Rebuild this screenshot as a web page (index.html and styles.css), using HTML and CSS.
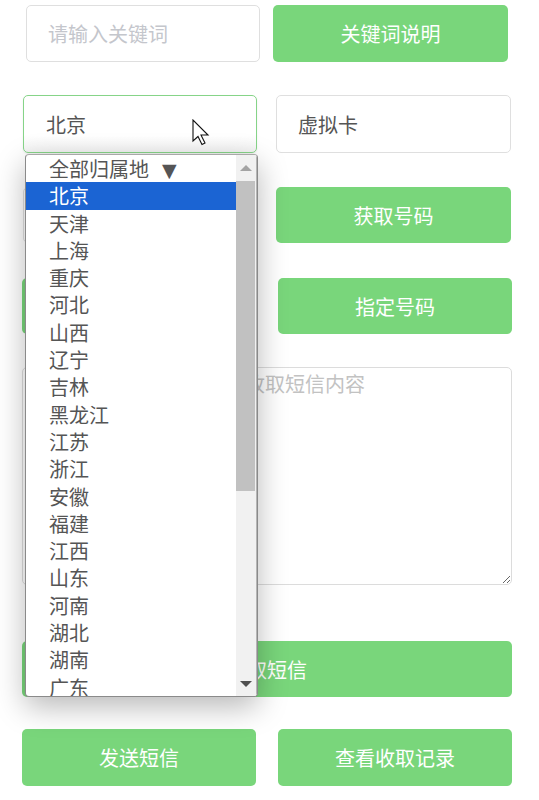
FILE: index.html
```html
<!DOCTYPE html>
<html lang="zh-CN">
<head>
<meta charset="utf-8">
<title>收取短信</title>
<link rel="stylesheet" href="styles.css">
</head>
<body>
<div class="page">
  <div class="row r1">
    <div class="field placeholder">请输入关键词</div>
    <div class="btn">关键词说明</div>
  </div>
  <div class="row r2">
    <div class="field select">北京</div>
    <div class="field">虚拟卡</div>
  </div>
  <div class="row r3">
    <div class="field placeholder">请输入号码</div>
    <div class="btn">获取号码</div>
  </div>
  <div class="row r4">
    <div class="btn">释放号码</div>
    <div class="btn">指定号码</div>
  </div>
  <div class="row r5">
    <textarea class="area" placeholder="此处将显示当前号码的收取短信内容"></textarea>
  </div>
  <div class="row r6">
    <div class="btn">收取短信</div>
  </div>
  <div class="row r7">
    <div class="btn">发送短信</div>
    <div class="btn">查看收取记录</div>
  </div>

  <div class="dropdown">
    <ul class="options">
      <li>全部归属地<span class="tri">▼</span></li>
      <li class="sel">北京</li>
      <li>天津</li>
      <li>上海</li>
      <li>重庆</li>
      <li>河北</li>
      <li>山西</li>
      <li>辽宁</li>
      <li>吉林</li>
      <li>黑龙江</li>
      <li>江苏</li>
      <li>浙江</li>
      <li>安徽</li>
      <li>福建</li>
      <li>江西</li>
      <li>山东</li>
      <li>河南</li>
      <li>湖北</li>
      <li>湖南</li>
      <li>广东</li>
    </ul>
    <div class="scrollbar">
      <div class="arrow up"></div>
      <div class="thumb"></div>
      <div class="track"></div>
      <div class="arrow down"></div>
    </div>
  </div>

  <svg class="cursor" width="19" height="27" viewBox="0 0 19 27">
    <path d="M1 1 L1 22 L6 17.5 L10 25.5 L13 24 L9 16 L16 16 Z" fill="#fff" stroke="#111" stroke-width="1.1" stroke-linejoin="miter"/>
  </svg>
</div>
</body>
</html>
```

FILE: styles.css
```css
* { box-sizing: border-box; }
html, body { margin: 0; padding: 0; background: #fff; }
body {
  font-family: "Noto Sans CJK SC", "Noto Sans", sans-serif;
  width: 539px;
  height: 800px;
  overflow: hidden;
}
.page {
  position: relative;
  display: flex;
  flex-direction: column;
  padding-top: 5px;
}
.row {
  display: grid;
}
.r1 { grid-template-columns: 234px 235px; column-gap: 13px; padding-left: 26px; height: 57px; }
.r2 { grid-template-columns: 234px 235px; column-gap: 19px; padding-left: 23px; height: 58px; margin-top: 33px; }
.r3 { grid-template-columns: 234px 235px; column-gap: 19px; padding-left: 23px; height: 56px; margin-top: 34px; }
.r4 { grid-template-columns: 234px 234px; column-gap: 22px; padding-left: 22px; height: 56px; margin-top: 35px; }
.r5 { grid-template-columns: 490px; padding-left: 22px; height: 218px; margin-top: 33px; }
.r6 { grid-template-columns: 490px; padding-left: 22px; height: 56px; margin-top: 56px; }
.r7 { grid-template-columns: 234px 234px; column-gap: 22px; padding-left: 22px; height: 57px; margin-top: 32px; }

.field {
  border: 1px solid #dfdfdf;
  border-radius: 5px;
  background: #fff;
  display: flex;
  align-items: center;
  padding-left: 21px;
  font-size: 20px;
  color: #555;
}
.field.placeholder { color: #c4c6cc; }
.field.select {
  border-color: #86d488;
  padding-left: 22px;
  background: linear-gradient(to bottom, #fff 70%, #f3f3f3 100%);
  box-shadow: 0 1px 2px rgba(0,0,0,0.08);
}
.btn {
  background: #79d67b;
  border-radius: 5px;
  color: #fff;
  font-size: 20px;
  display: flex;
  align-items: center;
  justify-content: center;
}
.area {
  border: 1px solid #dcdcdc;
  border-radius: 5px;
  padding: 2px 22px;
  font-family: "Noto Sans CJK SC", "Noto Sans", sans-serif;
  font-size: 20px;
  line-height: 28px;
  resize: both;
  width: 490px;
  height: 218px;
  margin: 0;
  outline: none;
}
.area::placeholder { color: #c2c2c2; }

.dropdown {
  position: absolute;
  left: 25px;
  top: 154px;
  width: 233px;
  height: 543px;
  border: 1px solid #8a8a8a;
  border-top-color: #a8a8a8;
  border-radius: 4px;
  background: #fff;
  box-shadow: 0 10px 30px rgba(0,0,0,0.28);
  display: flex;
  overflow: hidden;
}
.options {
  list-style: none;
  margin: 0;
  padding: 0;
  flex: 1;
  font-size: 20px;
  line-height: 27.3px;
  color: #555;
}
.options li {
  padding-left: 23px;
  height: 27.3px;
  white-space: nowrap;
  overflow: hidden;
}
.options li.sel { background: #1b64d3; color: #fff; }
.tri { font-family: "DejaVu Sans", sans-serif; font-size: 19px; color: #555; margin-left: 13px; }

.scrollbar {
  width: 21px;
  display: flex;
  flex-direction: column;
  background: #f1f1f1;
  border-right: 1px solid #b5b5b5;
}
.arrow {
  height: 26px;
  display: flex;
  justify-content: center;
  align-items: center;
}
.arrow.up::before {
  content: "";
  border-left: 6px solid transparent;
  border-right: 6px solid transparent;
  border-bottom: 6px solid #a3a3a3;
}
.arrow.down { height: 24px; }
.arrow.down::before {
  content: "";
  border-left: 6px solid transparent;
  border-right: 6px solid transparent;
  border-top: 6px solid #505050;
}
.thumb {
  height: 310px;
  background: #c1c1c1;
  margin: 0 1px 0 0;
}
.track { flex: 1; }

.cursor {
  position: absolute;
  left: 192px;
  top: 119px;
}
```
